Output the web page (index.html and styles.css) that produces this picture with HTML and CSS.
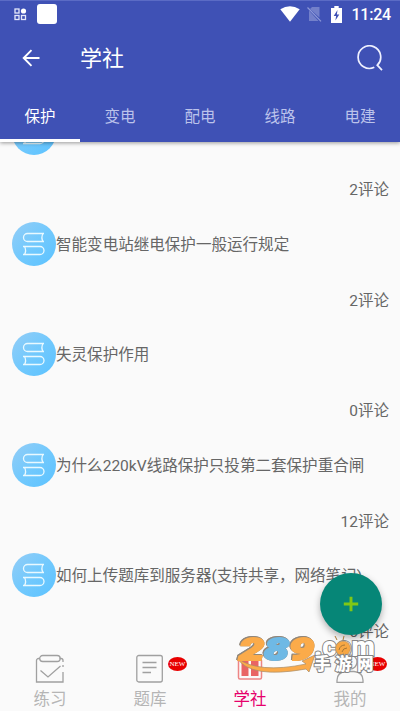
FILE: index.html
```html
<!DOCTYPE html>
<html lang="zh-CN">
<head>
<meta charset="utf-8">
<title>学社</title>
<link rel="stylesheet" href="styles.css">
</head>
<body>
<svg class="defs" width="0" height="0">
  <symbol id="books" viewBox="0 0 44 44">
    <path d="M32 11.500H15.500a4 4 0 0 0 0 8H32M31 11.500q-2.200 4 0 8M11 24.500H28a4 4 0 0 1 0 8H11M12.500 24.500q2.200 4 0 8" fill="none" stroke="#e9f9ff" stroke-width="1.300"/>
  </symbol>
</svg>
<div class="screen">
  <header class="header">
    <div class="status">
      <svg class="apps" width="13" height="13" viewBox="0 0 13 13"><g fill="none" stroke="#e4e7fa" stroke-width="1.300"><rect x="1" y="1" width="4" height="4"/><rect x="1" y="7.500" width="4" height="4"/><rect x="7.500" y="7.500" width="4" height="4"/></g><circle cx="9.500" cy="3" r="2.600" fill="#fff"/></svg>
      <span class="square"></span>
      <span class="spacer"></span>
      <svg class="wifi" width="20" height="16" viewBox="0 0 20 16"><path d="M.3 3.300Q10-2.800 19.700 3.300L10 15.700z" fill="#fff"/></svg>
      <svg class="sim" width="15" height="16" viewBox="0 0 15 16"><path d="M5 1h7.500v10.500L3 3zM2 4.500L11.500 15H2z" fill="#7380ca"/><path d="M.5 1.500L14 15.300" stroke="#8e99d8" stroke-width="1.200"/></svg>
      <svg class="battery" width="11" height="17" viewBox="0 0 11 17"><path d="M3.300 0h4.400v2H11v15H0V2h3.300z" fill="#fff"/><path d="M6.500 4L2.700 10h2.400l-.7 4.500L8.300 8.500H5.900z" fill="#3f51b5"/></svg>
      <span class="clock">11:24</span>
    </div>
    <div class="toolbar">
      <svg class="back" width="18" height="18" viewBox="0 0 18 18"><path d="M17.500 9H2M9.500 1.200L1.700 9l7.800 7.800" fill="none" stroke="#fff" stroke-width="1.900"/></svg>
      <h1 class="title">学社</h1>
      <svg class="search" width="26" height="26" viewBox="0 0 26 26"><path d="M17.300 22.300A11.300 11.300 0 1 1 20.300 20.200L25 25.200" fill="none" stroke="#eef0ff" stroke-width="1.700"/></svg>
    </div>
    <nav class="tabs">
      <span class="tab tab-active">保护</span><span class="tab">变电</span><span class="tab">配电</span><span class="tab">线路</span><span class="tab">电建</span>
    </nav>
  </header>
  <main class="list">
    <article class="item"><div class="topic"><svg class="avatar"><use href="#books"/></svg></div><p class="comments">2评论</p></article>
    <article class="item"><div class="topic"><svg class="avatar"><use href="#books"/></svg><span>智能变电站继电保护一般运行规定</span></div><p class="comments">2评论</p></article>
    <article class="item"><div class="topic"><svg class="avatar"><use href="#books"/></svg><span>失灵保护作用</span></div><p class="comments">0评论</p></article>
    <article class="item"><div class="topic"><svg class="avatar"><use href="#books"/></svg><span>为什么220kV线路保护只投第二套保护重合闸</span></div><p class="comments">12评论</p></article>
    <article class="item"><div class="topic"><svg class="avatar"><use href="#books"/></svg><span>如何上传题库到服务器(支持共享，网络笔记)</span></div><p class="comments">6评论</p></article>
  </main>
  <footer class="bottom">
    <div class="entry">
      <svg width="30" height="30" viewBox="0 0 30 30"><g fill="none" stroke="#a0a0a0" stroke-width="1.300"><path d="M5 4.500H3.500a2 2 0 0 0-2 2V28h26.500V18M28 13V11M28 8V6.500a2 2 0 0 0-2-2h-1.500"/><rect x="4.700" y="1.500" width="20.500" height="6" rx="3"/><path d="M5.500 16.500l7.500 6.500L25.500 12"/></g></svg>
      <span>练习</span>
    </div>
    <div class="entry">
      <svg width="30" height="30" viewBox="0 0 30 30"><g fill="none" stroke="#a0a0a0" stroke-width="1.300"><rect x="1.800" y="1.500" width="25.500" height="26.500" rx="2"/><path d="M7.500 8.500h14M7.500 13.500h14M7.500 18.500h8.500"/></g></svg>
      <span>题库</span><b class="badge">NEW</b>
    </div>
    <div class="entry entry-active">
      <svg width="30" height="30" viewBox="0 0 30 30"><rect x="3.500" y="5" width="23" height="20" rx="1.500" fill="none" stroke="#ee8585" stroke-width="1.500"/><path d="M6.500 6h7v16h-7zM16 6h7.500v16H16z" fill="#e96464"/></svg>
      <span>学社</span>
    </div>
    <div class="entry">
      <svg width="30" height="30" viewBox="0 0 30 30"><g fill="none" stroke="#a0a0a0" stroke-width="1.300"><circle cx="15" cy="8" r="7"/><path d="M2 28.300v-2q0-8 9-8.800h8q9 .8 9 8.800v2z"/></g></svg>
      <span>我的</span><b class="badge">NEW</b>
    </div>
  </footer>
  <button class="fab" aria-label="发布"><svg width="16" height="16" viewBox="0 0 16 16"><path d="M8 .8v14.400M.8 8h14.400" stroke="#80c715" stroke-width="2.900"/></svg></button>
  <svg class="watermark" width="145" height="44" viewBox="0 0 145 44">
    <path class="swoosh" d="M1 24Q22 40 70 30L66 27 79 21 73 38 70 35Q14 45 1 24z"/>
    <g class="digits">
      <text class="orange" x="3" y="25.500" textLength="25" lengthAdjust="spacingAndGlyphs">2</text>
      <text class="blue" x="28" y="25.500" textLength="25" lengthAdjust="spacingAndGlyphs">8</text>
      <text class="orange" x="53" y="25.500" textLength="25" lengthAdjust="spacingAndGlyphs">9</text>
    </g>
    <text class="com" x="78" y="22" textLength="61" lengthAdjust="spacingAndGlyphs">.com</text>
    <circle cx="107" cy="14.500" r="7.500" fill="#f7a744" stroke="#9b8b75" stroke-width=".6"/>
    <path d="M101 6l-2-4M107 6l1-4M103 16q1-5 6-5M106 18q1-4 5-4" fill="none" stroke="#a77735" stroke-width="1"/>
    <text class="site" y="35.500" x="78 99 121">手游网</text>
  </svg>
</div>
</body>
</html>
```
FILE: styles.css
```css
* { box-sizing: border-box; }
body {
  margin: 0;
  font-family: Roboto, "Noto Sans CJK SC", sans-serif;
  background: #fafafa;
}
.defs { position: absolute; }
.screen {
  position: relative;
  display: flex;
  flex-direction: column;
  width: 400px;
  height: 711px;
  overflow: hidden;
}
.header {
  position: relative;
  z-index: 1;
  flex: none;
  height: 142px;
  background: #3f51b5;
  border-top: 1px solid #5b6bc5;
  box-shadow: 0 1px 4px rgba(0, 0, 0, .4);
}
.status {
  display: flex;
  align-items: center;
  height: 26px;
  padding: 0 9px 0 14px;
}
.square {
  width: 20px;
  height: 20px;
  margin-left: 10px;
  border-radius: 3px;
  background: #fff;
}
.spacer { flex: 1; }
.sim { margin-left: 7px; }
.battery { margin-left: 9px; }
.clock {
  margin: 1px 0 0 9px;
  color: #fff;
  font-size: 16px;
  font-weight: 500;
  line-height: 20px;
  letter-spacing: -.2px;
}
.toolbar {
  display: flex;
  align-items: center;
  height: 62px;
  padding: 0 17px 0 22px;
}
.title {
  flex: 1;
  margin: 2px 0 0 40px;
  color: #fff;
  font-size: 22px;
  font-weight: 400;
  line-height: 32px;
}
.tabs {
  display: grid;
  grid-template-columns: repeat(5, 1fr);
  height: 53px;
}
.tab {
  padding-top: 15px;
  color: #bcc3eb;
  font-size: 15.5px;
  line-height: 26px;
  text-align: center;
}
.tab-active {
  color: #fff;
  border-bottom: 3px solid #fff;
}
.list {
  flex: none;
  height: 506px;
  overflow: hidden;
}
.item {
  height: 110.5px;
  padding: 0 11px 0 11.5px;
}
.item:first-child { margin-top: -31px; }
.topic {
  display: flex;
  align-items: center;
  color: #666;
  font-size: 15.55px;
  line-height: 24px;
  white-space: nowrap;
}
.topic span { margin-top: 2px; }
.avatar {
  flex: none;
  width: 44px;
  height: 44px;
  margin-right: .5px;
  border-radius: 50%;
  background: linear-gradient(135deg, #94cdf6, #72c9fd 50%, #5bc2ff);
}
.comments {
  margin: 23px 0 0;
  color: #666;
  font-size: 15.5px;
  line-height: 24px;
  text-align: right;
}
.bottom {
  display: grid;
  grid-template-columns: repeat(4, 1fr);
  height: 63px;
  padding-top: 6px;
}
.entry {
  position: relative;
  display: flex;
  flex-direction: column;
  align-items: center;
  color: #b5b5b5;
  font-size: 16.5px;
  line-height: 24px;
}
.entry span { margin-top: 4px; }
.entry-active { color: #e6006b; }
.badge {
  position: absolute;
  top: 3px;
  left: 68px;
  width: 19px;
  height: 14px;
  border-radius: 50%;
  background: #e80000;
  color: #fff;
  font: 7px/14px "Liberation Serif", serif;
  text-align: center;
}
.fab {
  position: absolute;
  z-index: 2;
  top: 573px;
  left: 320px;
  display: flex;
  align-items: center;
  justify-content: center;
  width: 62px;
  height: 62px;
  padding: 0;
  border: 0;
  border-radius: 50%;
  background: #068677;
  box-shadow: 0 3px 7px rgba(0, 0, 0, .3);
}
.watermark {
  position: absolute;
  z-index: 3;
  top: 634px;
  left: 236px;
  overflow: visible;
}
.digits {
  font: italic 900 32px Roboto, sans-serif;
  stroke-width: 2;
  filter: drop-shadow(.6px .6px 0 #91877b) drop-shadow(-.6px -.6px 0 #91877b);
}
.orange { fill: #fbab4a; stroke: #fbab4a; }
.blue { fill: #6fb9e5; stroke: #6fb9e5; }
.swoosh {
  fill: #fbab4a;
  stroke: #a78c69;
  stroke-width: .7;
}
.com, .site {
  fill: #fff;
  stroke: #858585;
  stroke-width: 2;
  paint-order: stroke;
}
.com { font: 900 28px Roboto, sans-serif; }
.site { font: 900 16.5px "Noto Sans CJK SC", sans-serif; }
```
